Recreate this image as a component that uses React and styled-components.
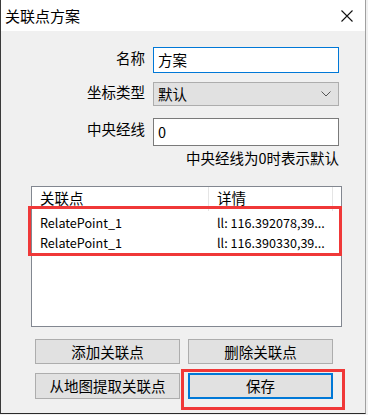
import React from "react";
import styled, { createGlobalStyle } from "styled-components";

const GlobalStyle = createGlobalStyle`
  html, body {
    margin: 0;
    padding: 0;
    background: #f0f0f0;
  }
  * {
    box-sizing: border-box;
  }
`;

const font = `"Noto Sans CJK SC", "Noto Sans", sans-serif`;

const Window = styled.div`
  width: 366px;
  height: 414px;
  background: #f0f0f0;
  border-left: 1px solid #3a3a3a;
  border-right: 1px solid #a0a0a0;
  border-bottom: 1px solid #2a2a2a;
  font-family: ${font};
  font-size: 14.5px;
  color: #000;
  display: flex;
  flex-direction: column;
`;

const TitleBar = styled.div`
  height: 31px;
  background: #fff;
  display: flex;
  align-items: center;
  justify-content: space-between;
  padding: 0 11px 0 4px;
  flex-shrink: 0;
`;

const Title = styled.span`
  font-size: 15px;
  line-height: 20px;
`;

const Close = styled.div`
  width: 14px;
  height: 14px;
  display: flex;
  align-items: center;
  justify-content: center;
`;

const Form = styled.div`
  display: flex;
  flex-direction: column;
`;

const FieldRow = styled.div`
  display: grid;
  grid-template-columns: 144px 186px;
  column-gap: 8px;
  align-items: center;
  margin-top: ${(p) => p.$mt}px;
  height: ${(p) => p.$h}px;
`;

const Label = styled.label`
  text-align: right;
  line-height: 20px;
  margin-top: -4px;
`;

const TextBox = styled.div`
  height: 100%;
  background: #fff;
  border: 1px solid ${(p) => (p.$focused ? "#0078d7" : "#7a7a7a")};
  display: flex;
  align-items: center;
  padding-left: 4px;
  line-height: 20px;
  margin-top: ${(p) => (p.$focused ? 0 : 1)}px;
`;

const Combo = styled.div`
  height: 100%;
  background: #e1e1e1;
  border: 1px solid #adadad;
  display: flex;
  align-items: center;
  justify-content: space-between;
  padding: 0 7px 0 4px;
  line-height: 20px;
`;

const Hint = styled.div`
  width: 338px;
  text-align: right;
  line-height: 20px;
  margin-top: 3px;
`;

const ListView = styled.div`
  position: relative;
  margin: 18px 0 0 30px;
  width: 311px;
  height: 141px;
  background: #fff;
  border: 1px solid #828790;
`;

const HeaderRow = styled.div`
  display: grid;
  grid-template-columns: 177px 124px;
  height: 24px;
`;

const HeaderCell = styled.div`
  padding-left: 8px;
  line-height: 22px;
  border-right: 1px solid #e5e5e5;
`;

const Row = styled.div`
  display: grid;
  grid-template-columns: 177px 130px;
  height: 20px;
  align-items: center;
  font-size: 12.6px;
  line-height: 20px;
  white-space: nowrap;
`;

const Cell = styled.div`
  padding-left: 8px;
`;

const Rows = styled.div`
  padding-top: 2px;
`;

const Mark = styled.div`
  position: absolute;
  border: 3px solid #f03838;
  pointer-events: none;
`;

const ButtonGrid = styled.div`
  display: grid;
  grid-template-columns: 145px 145px;
  column-gap: 8px;
  row-gap: 9px;
  margin: 12px 0 0 34px;
`;

const Button = styled.div`
  position: relative;
  height: ${(p) => p.$h}px;
  background: #e1e1e1;
  border: ${(p) => (p.$primary ? "2px solid #0078d7" : "1px solid #adadad")};
  display: flex;
  align-items: center;
  justify-content: center;
  line-height: 20px;
`;

const Chevron = () => (
  <svg width="10" height="6" viewBox="0 0 10 6">
    <path d="M0.5 0.5 L5 5 L9.5 0.5" fill="none" stroke="#555" strokeWidth="1" />
  </svg>
);

const CloseIcon = () => (
  <svg width="12" height="12" viewBox="0 0 12 12">
    <path d="M0.5 0.5 L11.5 11.5 M11.5 0.5 L0.5 11.5" stroke="#111" strokeWidth="1.1" />
  </svg>
);

const points = [
  { name: "RelatePoint_1", detail: "ll: 116.392078,39..." },
  { name: "RelatePoint_1", detail: "ll: 116.390330,39..." },
];

const App = () => {
  return (
    <>
      <GlobalStyle />
      <Window>
        <TitleBar>
          <Title>关联点方案</Title>
          <Close>
            <CloseIcon />
          </Close>
        </TitleBar>
        <Form>
          <FieldRow $mt={16} $h={26}>
            <Label>名称</Label>
            <TextBox $focused>方案</TextBox>
          </FieldRow>
          <FieldRow $mt={9} $h={24}>
            <Label>坐标类型</Label>
            <Combo>
              <span>默认</span>
              <Chevron />
            </Combo>
          </FieldRow>
          <FieldRow $mt={11} $h={28}>
            <Label>中央经线</Label>
            <TextBox>0</TextBox>
          </FieldRow>
          <Hint>中央经线为0时表示默认</Hint>
        </Form>
        <ListView>
          <HeaderRow>
            <HeaderCell>关联点</HeaderCell>
            <HeaderCell>详情</HeaderCell>
          </HeaderRow>
          <Rows>
            {points.map((p, i) => (
              <Row key={i}>
                <Cell>{p.name}</Cell>
                <Cell>{p.detail}</Cell>
              </Row>
            ))}
          </Rows>
          <Mark style={{ left: -4, top: 19, width: 314, height: 50 }} />
        </ListView>
        <ButtonGrid>
          <Button $h={25}>添加关联点</Button>
          <Button $h={25}>删除关联点</Button>
          <Button $h={26}>从地图提取关联点</Button>
          <Button $h={26} $primary>
            保存
            <Mark style={{ left: -9, top: -6, width: 164, height: 41 }} />
          </Button>
        </ButtonGrid>
      </Window>
    </>
  );
};

export default App;
